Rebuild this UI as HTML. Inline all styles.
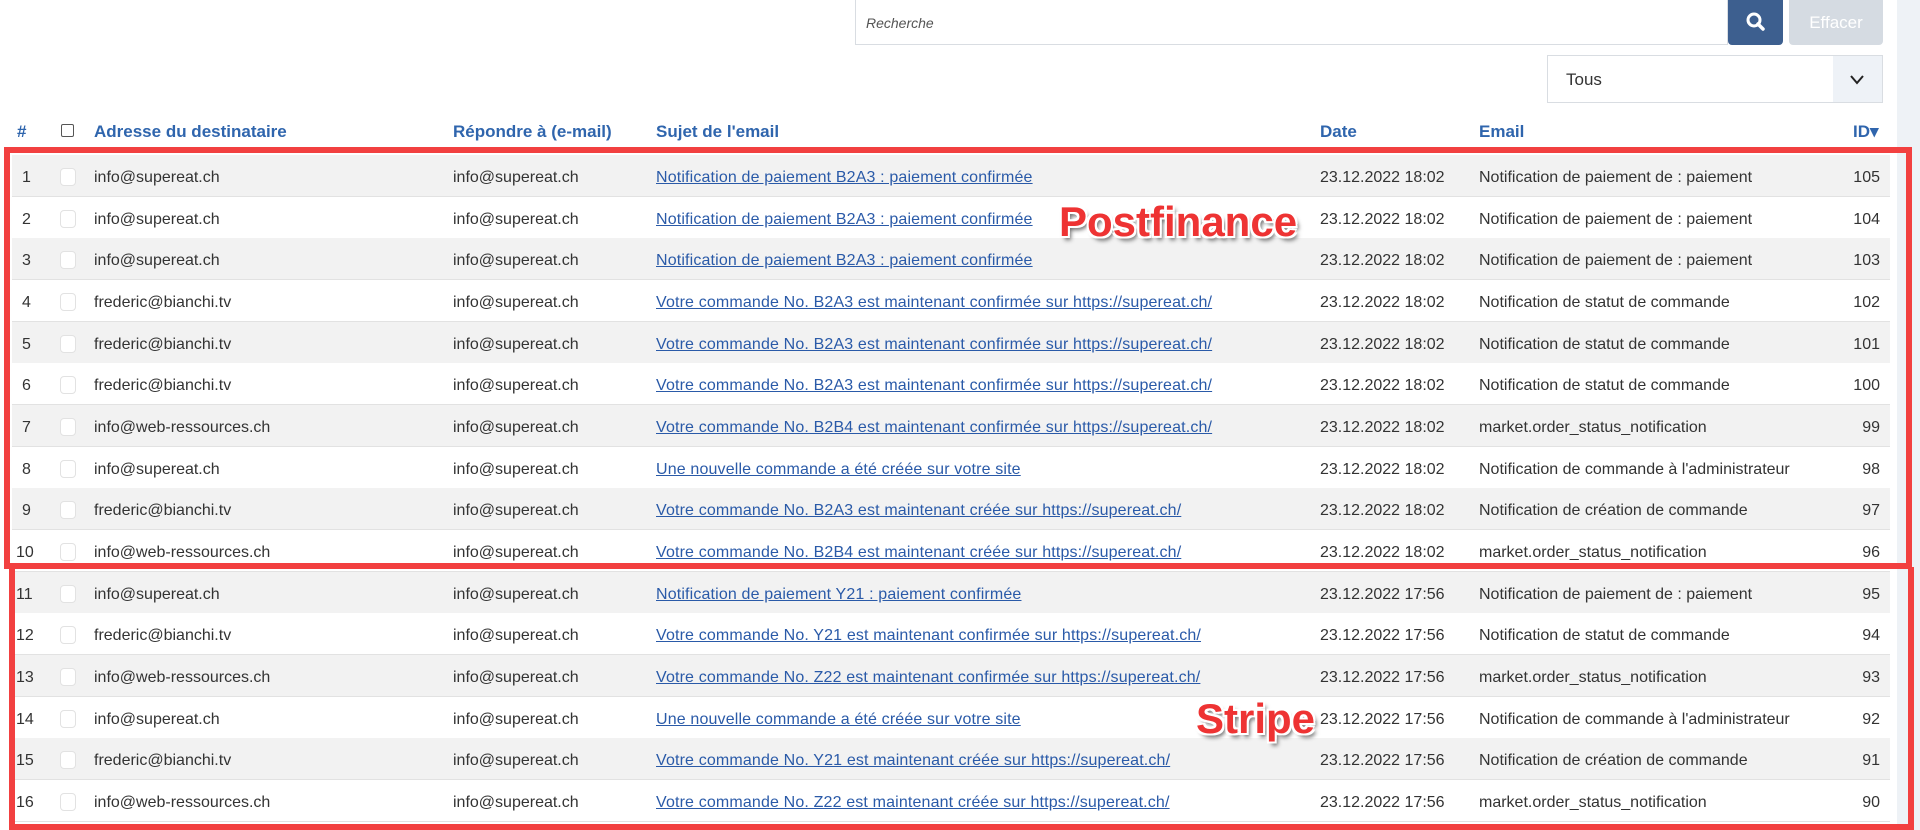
<!DOCTYPE html>
<html><head><meta charset="utf-8"><style>
*{box-sizing:border-box;margin:0;padding:0}
body{width:1920px;height:830px;overflow:hidden;background:#fff;font-family:"Liberation Sans",sans-serif;font-size:16px;color:#333;position:relative}
.a{position:absolute;white-space:nowrap}
.side{left:1897px;top:0;width:23px;height:830px;background:#eef2f6}
.search{left:855px;top:0;width:873px;height:45px;border:1px solid #d9dde2;border-top:none;font-style:italic;font-size:14px;color:#555;padding:15px 10px}
.sbtn{left:1728px;top:0;width:55px;height:45px;background:#3d5f8f;border-radius:0 0 4px 4px}
.ebtn{left:1789px;top:0;width:94px;height:45px;background:#d5dbe2;border-radius:0 0 4px 4px;color:#fff;font-size:17px;text-align:center;line-height:45px}
.sel{left:1547px;top:55px;width:336px;height:48px;border:1px solid #d9dde2;padding:14px 18px;font-size:17px}
.arr{left:1833px;top:56px;width:49px;height:46px;background:#eef2f7}
.h{top:122px;font-weight:bold;color:#2f65ad;font-size:17px}
.row{left:12px;width:1878px;height:42px;border-bottom:1px solid #e2e2e2}
.row span{position:absolute;top:14px;white-space:nowrap}
.row a{color:#2a5aa8;text-decoration:underline;letter-spacing:0.15px}
.cb{position:absolute;left:48px;top:13px;width:16px;height:18px;border:1px solid #e2e2e2;border-radius:4px;background:#fff}
.box{position:absolute;border:6px solid #f24040}
.lbl{position:absolute;font-weight:bold;color:#ee3333;font-size:42px;text-shadow:-2px -2px 0 #fff,2px -2px 0 #fff,-2px 2px 0 #fff,2px 2px 0 #fff,3px 4px 4px #666}
</style></head><body>
<div class="a side"></div>
<div class="a search">Recherche</div>
<div class="a sbtn"><svg width="55" height="45"><circle cx="26" cy="20" r="6" fill="none" stroke="#fff" stroke-width="3"/><path d="M30 24l5 5" stroke="#fff" stroke-width="3.5" stroke-linecap="round"/></svg></div>
<div class="a ebtn">Effacer</div>
<div class="a sel">Tous</div>
<div class="a arr"><svg width="49" height="46"><path d="M18 20l6 7 6-7" fill="none" stroke="#222" stroke-width="2"/></svg></div>
<div class="a h" style="left:17px">#</div>
<div class="a" style="left:61px;top:124px;width:13px;height:13px;border:1px solid #555;border-radius:2px"></div>
<div class="a h" style="left:94px">Adresse du destinataire</div>
<div class="a h" style="left:453px">Répondre à (e-mail)</div>
<div class="a h" style="left:656px">Sujet de l'email</div>
<div class="a h" style="left:1320px">Date</div>
<div class="a h" style="left:1479px">Email</div>
<div class="a h" style="left:1853px">ID▾</div>
<div id="rows"></div>
<div class="box" style="left:4px;top:147px;width:1908px;height:422px"></div>
<div class="box" style="left:9px;top:567px;width:1905px;height:263px;border-top:none"></div>
<div class="lbl" style="left:1059px;top:198px">Postfinance</div>
<div class="lbl" style="left:1196px;top:695px">Stripe</div>
<script>
var d=[
["info@supereat.ch","Notification de paiement B2A3 : paiement confirmée","18:02","Notification de paiement de : paiement",105],
["info@supereat.ch","Notification de paiement B2A3 : paiement confirmée","18:02","Notification de paiement de : paiement",104],
["info@supereat.ch","Notification de paiement B2A3 : paiement confirmée","18:02","Notification de paiement de : paiement",103],
["frederic@bianchi.tv","Votre commande No. B2A3 est maintenant confirmée sur https://supereat.ch/","18:02","Notification de statut de commande",102],
["frederic@bianchi.tv","Votre commande No. B2A3 est maintenant confirmée sur https://supereat.ch/","18:02","Notification de statut de commande",101],
["frederic@bianchi.tv","Votre commande No. B2A3 est maintenant confirmée sur https://supereat.ch/","18:02","Notification de statut de commande",100],
["info@web-ressources.ch","Votre commande No. B2B4 est maintenant confirmée sur https://supereat.ch/","18:02","market.order_status_notification",99],
["info@supereat.ch","Une nouvelle commande a été créée sur votre site","18:02","Notification de commande à l'administrateur",98],
["frederic@bianchi.tv","Votre commande No. B2A3 est maintenant créée sur https://supereat.ch/","18:02","Notification de création de commande",97],
["info@web-ressources.ch","Votre commande No. B2B4 est maintenant créée sur https://supereat.ch/","18:02","market.order_status_notification",96],
["info@supereat.ch","Notification de paiement Y21 : paiement confirmée","17:56","Notification de paiement de : paiement",95],
["frederic@bianchi.tv","Votre commande No. Y21 est maintenant confirmée sur https://supereat.ch/","17:56","Notification de statut de commande",94],
["info@web-ressources.ch","Votre commande No. Z22 est maintenant confirmée sur https://supereat.ch/","17:56","market.order_status_notification",93],
["info@supereat.ch","Une nouvelle commande a été créée sur votre site","17:56","Notification de commande à l'administrateur",92],
["frederic@bianchi.tv","Votre commande No. Y21 est maintenant créée sur https://supereat.ch/","17:56","Notification de création de commande",91],
["info@web-ressources.ch","Votre commande No. Z22 est maintenant créée sur https://supereat.ch/","17:56","market.order_status_notification",90]];
var h="";
d.forEach(function(r,i){
var t=155+i*41.67;
h+='<div class="a row" style="top:'+t+'px;background:'+(i%2==0?'#f2f2f2':'#fff')+'"><span style="left:'+(i>8?4:10)+'px">'+(i+1)+'</span><div class="cb"></div><span style="left:82px">'+r[0]+'</span><span style="left:441px">info@supereat.ch</span><span style="left:644px"><a>'+r[1]+'</a></span><span style="left:1308px">23.12.2022 '+r[2]+'</span><span style="left:1467px">'+r[3]+'</span><span style="right:10px">'+r[4]+'</span></div>';
});
document.getElementById("rows").innerHTML=h;
</script>
</body></html>
